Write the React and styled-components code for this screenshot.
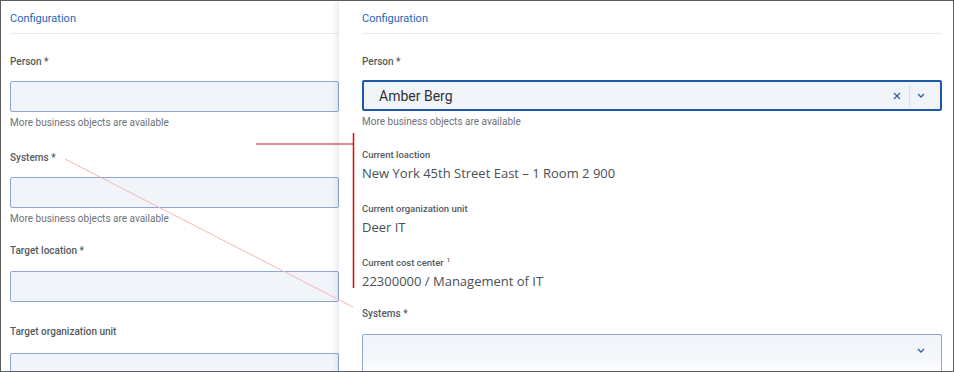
import styled, { createGlobalStyle } from 'styled-components'

const GlobalStyle = createGlobalStyle`
  html, body { margin: 0; padding: 0; background: #fff; }
  body { font-family: Roboto, "Liberation Sans", sans-serif; }
`;

const Frame = styled.div`
  position: relative;
  width: 954px;
  height: 372px;
  box-sizing: border-box;
  border: 1px solid #5c5c5c;
  overflow: hidden;
  display: flex;
  background: #fff;
`;

const LeftPanel = styled.div`
  width: 338px;
  flex-shrink: 0;
  padding-left: 9px;
  box-sizing: border-box;
  display: flex;
  flex-direction: column;
`;

const RightPanel = styled.div`
  flex: 1;
  position: relative;
  z-index: 1;
  background: #fff;
  padding: 0 11px 0 23px;
  box-shadow: -3px 0 5px rgba(60, 90, 140, 0.12);
  display: flex;
  flex-direction: column;
`;

const Header = styled.div`
  height: 33px;
  flex-shrink: 0;
  display: flex;
  align-items: center;
  padding-top: 3px;
  box-sizing: border-box;
  border-bottom: 1px solid #e9ebee;
  color: #2466b4;
  font-size: 11px;
`;

const Label = styled.div`
  font-size: 10px;
  line-height: 14px;
  font-weight: 500;
  color: #555b61;
  margin-top: ${({ $top }) => $top}px;
`;

const Hint = styled.div`
  font-size: 10px;
  line-height: 14px;
  color: #6c7278;
  margin-top: 4px;
`;

const Input = styled.div`
  height: 31px;
  box-sizing: border-box;
  margin-top: ${({ $top }) => $top ?? 12}px;
  flex-shrink: 0;
  border: ${({ $focused }) => ($focused ? '2px solid #1b5aa7' : '1px solid #8ba7d3')};
  border-radius: 2px;
  background: ${({ $fade }) =>
    $fade ? 'linear-gradient(#f1f4f9 0%, #f3f6fa 55%, #ffffff 100%)' : '#f1f4f9'};
  display: flex;
  align-items: center;
  padding: 0 ${({ $focused }) => ($focused ? 15 : 16)}px 0 15px;
  ${({ $fade }) => ($fade ? 'border-bottom: none; height: 40px;' : '')}
`;

const Value = styled.span`
  flex: 1;
  font-size: 14px;
  color: #2f3337;
`;

const Icons = styled.div`
  display: flex;
  align-items: center;
  color: #2a5fa9;
  ${({ $fade }) => ($fade ? 'margin-top: -9px;' : '')}
`;

const Sep = styled.div`
  width: 1px;
  height: 22px;
  background: #dcdfe3;
  margin: 0 7px 0 8px;
`;

const InfoLabel = styled.div`
  font-size: 9.5px;
  line-height: 14px;
  font-weight: 500;
  color: #555b61;
  margin-top: ${({ $top }) => $top}px;
  sup { font-size: 6px; margin-left: 3px; line-height: 0; vertical-align: 4px; }
`;

const InfoValue = styled.div`
  font-family: "Open Sans", "Noto Sans", sans-serif;
  font-size: 13px;
  line-height: 18px;
  color: #4a4f54;
  margin-top: 2px;
`;

const Overlay = styled.svg`
  position: absolute;
  left: 0;
  top: 0;
  width: 954px;
  height: 372px;
  pointer-events: none;
  z-index: 2;
`;

const Close = () => (
  <svg width="8" height="8" viewBox="0 0 8 8">
    <path d="M1 1L7 7M7 1L1 7" stroke="currentColor" strokeWidth="1.2" fill="none" />
  </svg>
);

const Chevron = () => (
  <svg width="8" height="5" viewBox="0 0 8 5">
    <path d="M1 1L4 4L7 1" stroke="currentColor" strokeWidth="1.3" fill="none" />
  </svg>
);

const App = () => {
  return (
    <>
      <GlobalStyle />
      <Frame>
        <LeftPanel>
          <Header>Configuration</Header>
          <Label $top={21}>Person *</Label>
          <Input />
          <Hint>More business objects are available</Hint>
          <Label $top={21}>Systems *</Label>
          <Input />
          <Hint>More business objects are available</Hint>
          <Label $top={18}>Target location *</Label>
          <Input $top={13} />
          <Label $top={23}>Target organization unit</Label>
          <Input $fade $top={14} />
        </LeftPanel>
        <RightPanel>
          <Header>Configuration</Header>
          <Label $top={21}>Person *</Label>
          <Input $focused $top={11}>
            <Value>Amber Berg</Value>
            <Icons>
              <Close />
              <Sep />
              <Chevron />
            </Icons>
          </Input>
          <Hint>More business objects are available</Hint>
          <InfoLabel $top={19}>Current loaction</InfoLabel>
          <InfoValue>New York 45th Street East – 1 Room 2 900</InfoValue>
          <InfoLabel $top={20}>Current organization unit</InfoLabel>
          <InfoValue>Deer IT</InfoValue>
          <InfoLabel $top={20}>Current cost center<sup>1</sup></InfoLabel>
          <InfoValue>22300000 / Management of IT</InfoValue>
          <Label $top={17}>Systems *</Label>
          <Input $fade $top={13}>
            <Value />
            <Icons $fade>
              <Chevron />
            </Icons>
          </Input>
        </RightPanel>
        <Overlay viewBox="0 0 954 372">
          <line x1="64" y1="158" x2="352" y2="306" stroke="#f4b6b6" strokeWidth="1" />
          <line x1="255" y1="143" x2="352" y2="143" stroke="#c81414" strokeWidth="1.2" />
          <line x1="352.5" y1="132" x2="352.5" y2="287" stroke="#e60000" strokeWidth="1.5" />
        </Overlay>
      </Frame>
    </>
  )
}

export default App
